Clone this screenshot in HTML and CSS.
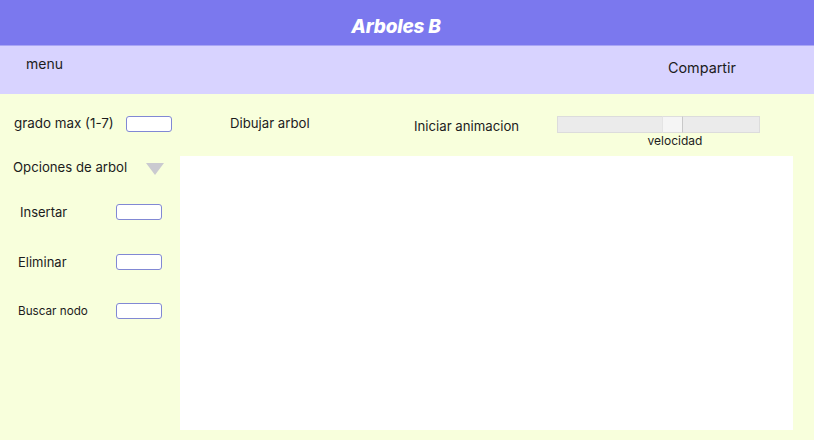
FILE: index.html
```html
<!DOCTYPE html>
<html lang="es">
<head>
<meta charset="utf-8">
<title>Arboles B</title>
<link rel="stylesheet" href="styles.css">
</head>
<body>
<header class="topbar"><h1 class="title">Arboles B</h1></header>
<nav class="navbar">
  <span class="nav-menu">menu</span>
  <span class="nav-share">Compartir</span>
</nav>
<main class="main">
  <div class="grado">
    <span class="lbl">grado max (1-7)</span>
    <input class="field field-grado" type="text">
  </div>
  <div class="controls">
    <span class="ctl-draw">Dibujar arbol</span>
    <span class="ctl-anim">Iniciar animacion</span>
    <div class="speed">
      <div class="track"><div class="track-l"></div><div class="thumb"></div><div class="track-r"></div></div>
      <span class="speed-lbl">velocidad</span>
    </div>
  </div>
  <aside class="side">
    <div class="opts">
      <span class="opts-lbl">Opciones de arbol</span>
      <svg class="caret" width="18" height="12" viewBox="0 0 18 12"><polygon points="0,0 18,0 9,12" fill="#cacad0"/></svg>
    </div>
    <div class="row row-ins"><span class="lbl">Insertar</span><input class="field" type="text"></div>
    <div class="row row-del"><span class="lbl">Eliminar</span><input class="field" type="text"></div>
    <div class="row row-find"><span class="lbl small">Buscar nodo</span><input class="field" type="text"></div>
  </aside>
  <section class="canvas"></section>
</main>
</body>
</html>
```
FILE: styles.css
```css
* { box-sizing: border-box; }
html, body { margin: 0; padding: 0; }
body {
  width: 814px; height: 440px; overflow: hidden;
  background: #f8ffdc;
  font-family: Inter, "Noto Sans", sans-serif;
  color: #1c1c1c;
  font-size: 13px;
}
.topbar {
  height: 46px; background: #7b78ee;
  display: flex; align-items: center; justify-content: center;
  border-bottom: 1px solid #a9a5f4;
  padding-right: 22px;
}
.title {
  margin: 0; color: #fff; font-size: 19px; font-weight: 800; font-style: italic;
  letter-spacing: -0.2px; padding-top: 7px;
}
.navbar {
  height: 48px; background: #d8d3ff;
  display: flex; justify-content: space-between; align-items: flex-start;
}
.nav-menu { margin: 9px 0 0 26px; font-size: 14px; }
.nav-share { margin: 13px 78px 0 0; font-size: 14.4px; }
.main {
  display: grid;
  grid-template-columns: 180px 613px;
  grid-template-rows: 62px 274px;
}
.grado { display: flex; align-items: center; padding: 14px 0 0 14px; height: 44px; }
.lbl { font-size: 13px; }
.grado .lbl { font-size: 13.4px; }
.field {
  width: 46px; height: 16px; border: 1.5px solid #8188d4; border-radius: 3px;
  background: #fff; margin: 0; padding: 0; outline: none;
}
.field-grado { margin-left: 12px; margin-top: 1px; }
.controls { display: flex; align-items: flex-start; }
.ctl-draw { margin: 21px 0 0 50px; width: 184px; font-size: 13.2px; }
.ctl-anim { margin: 24px 0 0 0; width: 143px; font-size: 13.2px; }
.speed { margin: 22px 0 0 0; display: flex; flex-direction: column; align-items: center; width: 203px; }
.track { display: flex; width: 203px; height: 17px; }
.track-l, .track-r { background: #ebebeb; border: 1px solid #dcdcdc; }
.track-l { width: 105px; border-right: none; }
.thumb { width: 21px; background: #f5f5f5; border-top: 1px solid #dedede; border-bottom: 1px solid #dedede; border-left: 1px solid #e4e4e4; border-right: 1px solid #c8c8c8; }
.track-r { flex: 1; border-left: none; }
.speed-lbl { font-size: 12px; margin-left: 33px; }
.side { display: flex; flex-direction: column; }
.opts { display: flex; align-items: center; padding: 2px 0 0 13px; height: 20px; }
.opts-lbl { font-size: 13.2px; }
.caret { margin-left: 19px; margin-top: 3px; }
.row { display: flex; align-items: center; justify-content: space-between; padding-right: 18px; }
.row-ins { margin-top: 28px; padding-left: 20px; }
.row-del { margin-top: 34px; padding-left: 18px; }
.row-find { margin-top: 33px; padding-left: 18px; }
.small { font-size: 11.7px; }
.canvas { background: #fff; }
```
